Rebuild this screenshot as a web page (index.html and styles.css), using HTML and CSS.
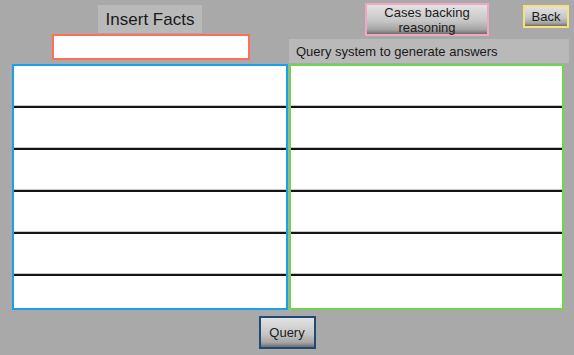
FILE: index.html
```html
<!DOCTYPE html>
<html lang="en">

<head>
  <meta charset="UTF-8">
  <meta name="viewport" content="width=device-width, initial-scale=1.0">
  <title>Insert Facts</title>
  <link rel="stylesheet" href="styles.css">
</head>

<body>
  <header class="top">
    <div class="facts-head">
      <div class="label facts-label">Insert Facts</div>
      <input class="fact-input" type="text">
    </div>
    <div class="query-head">
      <div class="actions">
        <button class="btn cases-btn">Cases backing<br>reasoning</button>
        <button class="btn back-btn">Back</button>
      </div>
      <div class="label query-label">Query system to generate answers</div>
    </div>
  </header>

  <main class="lists">
    <div class="list facts-list">
      <div class="row"></div>
      <div class="row"></div>
      <div class="row"></div>
      <div class="row"></div>
      <div class="row"></div>
      <div class="row"></div>
    </div>
    <div class="list answers-list">
      <div class="row"></div>
      <div class="row"></div>
      <div class="row"></div>
      <div class="row"></div>
      <div class="row"></div>
      <div class="row"></div>
    </div>
  </main>

  <footer class="bottom">
    <button class="btn query-btn">Query</button>
  </footer>
</body>

</html>
```

FILE: styles.css
```css
:root {
  --bg: #a9a9a9;
  --label-bg: #b9b9b9;
  --text: #1a1a1a;
}

body {
  margin: 0;
  width: 574px;
  height: 355px;
  overflow: hidden;
  background: var(--bg);
  color: var(--text);
  font-family: "Liberation Sans", Arial, sans-serif;
}

.top {
  display: grid;
  grid-template-columns: 276px 1fr;
  gap: 1px;
  height: 64px;
  margin: 0 6px 0 12px;
}

.facts-head {
  display: flex;
  flex-direction: column;
  align-items: center;
}

.label {
  background: var(--label-bg);
}

.facts-label {
  box-sizing: border-box;
  width: 104px;
  height: 28px;
  margin-top: 5px;
  display: grid;
  place-items: center;
  font-size: 17px;
  padding-top: 1px;
}

.fact-input {
  box-sizing: border-box;
  width: 198px;
  height: 26px;
  margin: 1px 0 0 2px;
  border: 2px solid #ff6e56;
  background: #fff;
  padding: 0;
  outline: none;
}

.query-head {
  display: flex;
  flex-direction: column;
}

.actions {
  display: flex;
  align-items: flex-start;
  gap: 34px;
  padding: 3px 0 0 76px;
}

.btn {
  box-sizing: border-box;
  font-family: inherit;
  font-size: 13px;
  color: var(--text);
  line-height: 15px;
  padding: 0;
  border: 2px solid;
  background: linear-gradient(#e2e2e2, #c6c6c6 55%, #a4a4a4 85%, #6e6e6e);
}

.cases-btn {
  width: 124px;
  height: 33px;
  border-color: #f3a5c6;
}

.back-btn {
  width: 46px;
  height: 23px;
  margin-top: 2px;
  border-color: #f4e37a;
}

.query-label {
  box-sizing: border-box;
  height: 24px;
  margin-top: 3px;
  padding: 0 7px;
  display: flex;
  align-items: center;
  font-size: 13px;
}

.lists {
  display: grid;
  grid-template-columns: 276px 275px;
  gap: 1px;
  margin-left: 12px;
}

.list {
  box-sizing: border-box;
  height: 246px;
  overflow: hidden;
  background: #fff;
  border: 2px solid;
}

.facts-list {
  border-color: #1a9ff0;
}

.answers-list {
  border-color: #6fd64c;
}

.row {
  box-sizing: border-box;
  height: 42px;
  flex-shrink: 0;
  border-bottom: 2px solid #141414;
  box-shadow: inset 0 -1px 0 #c6c6c6;
}

.bottom {
  display: flex;
  justify-content: center;
  padding-top: 6px;
}

.query-btn {
  width: 57px;
  height: 33px;
  border-color: #1d4b73;
}
```
